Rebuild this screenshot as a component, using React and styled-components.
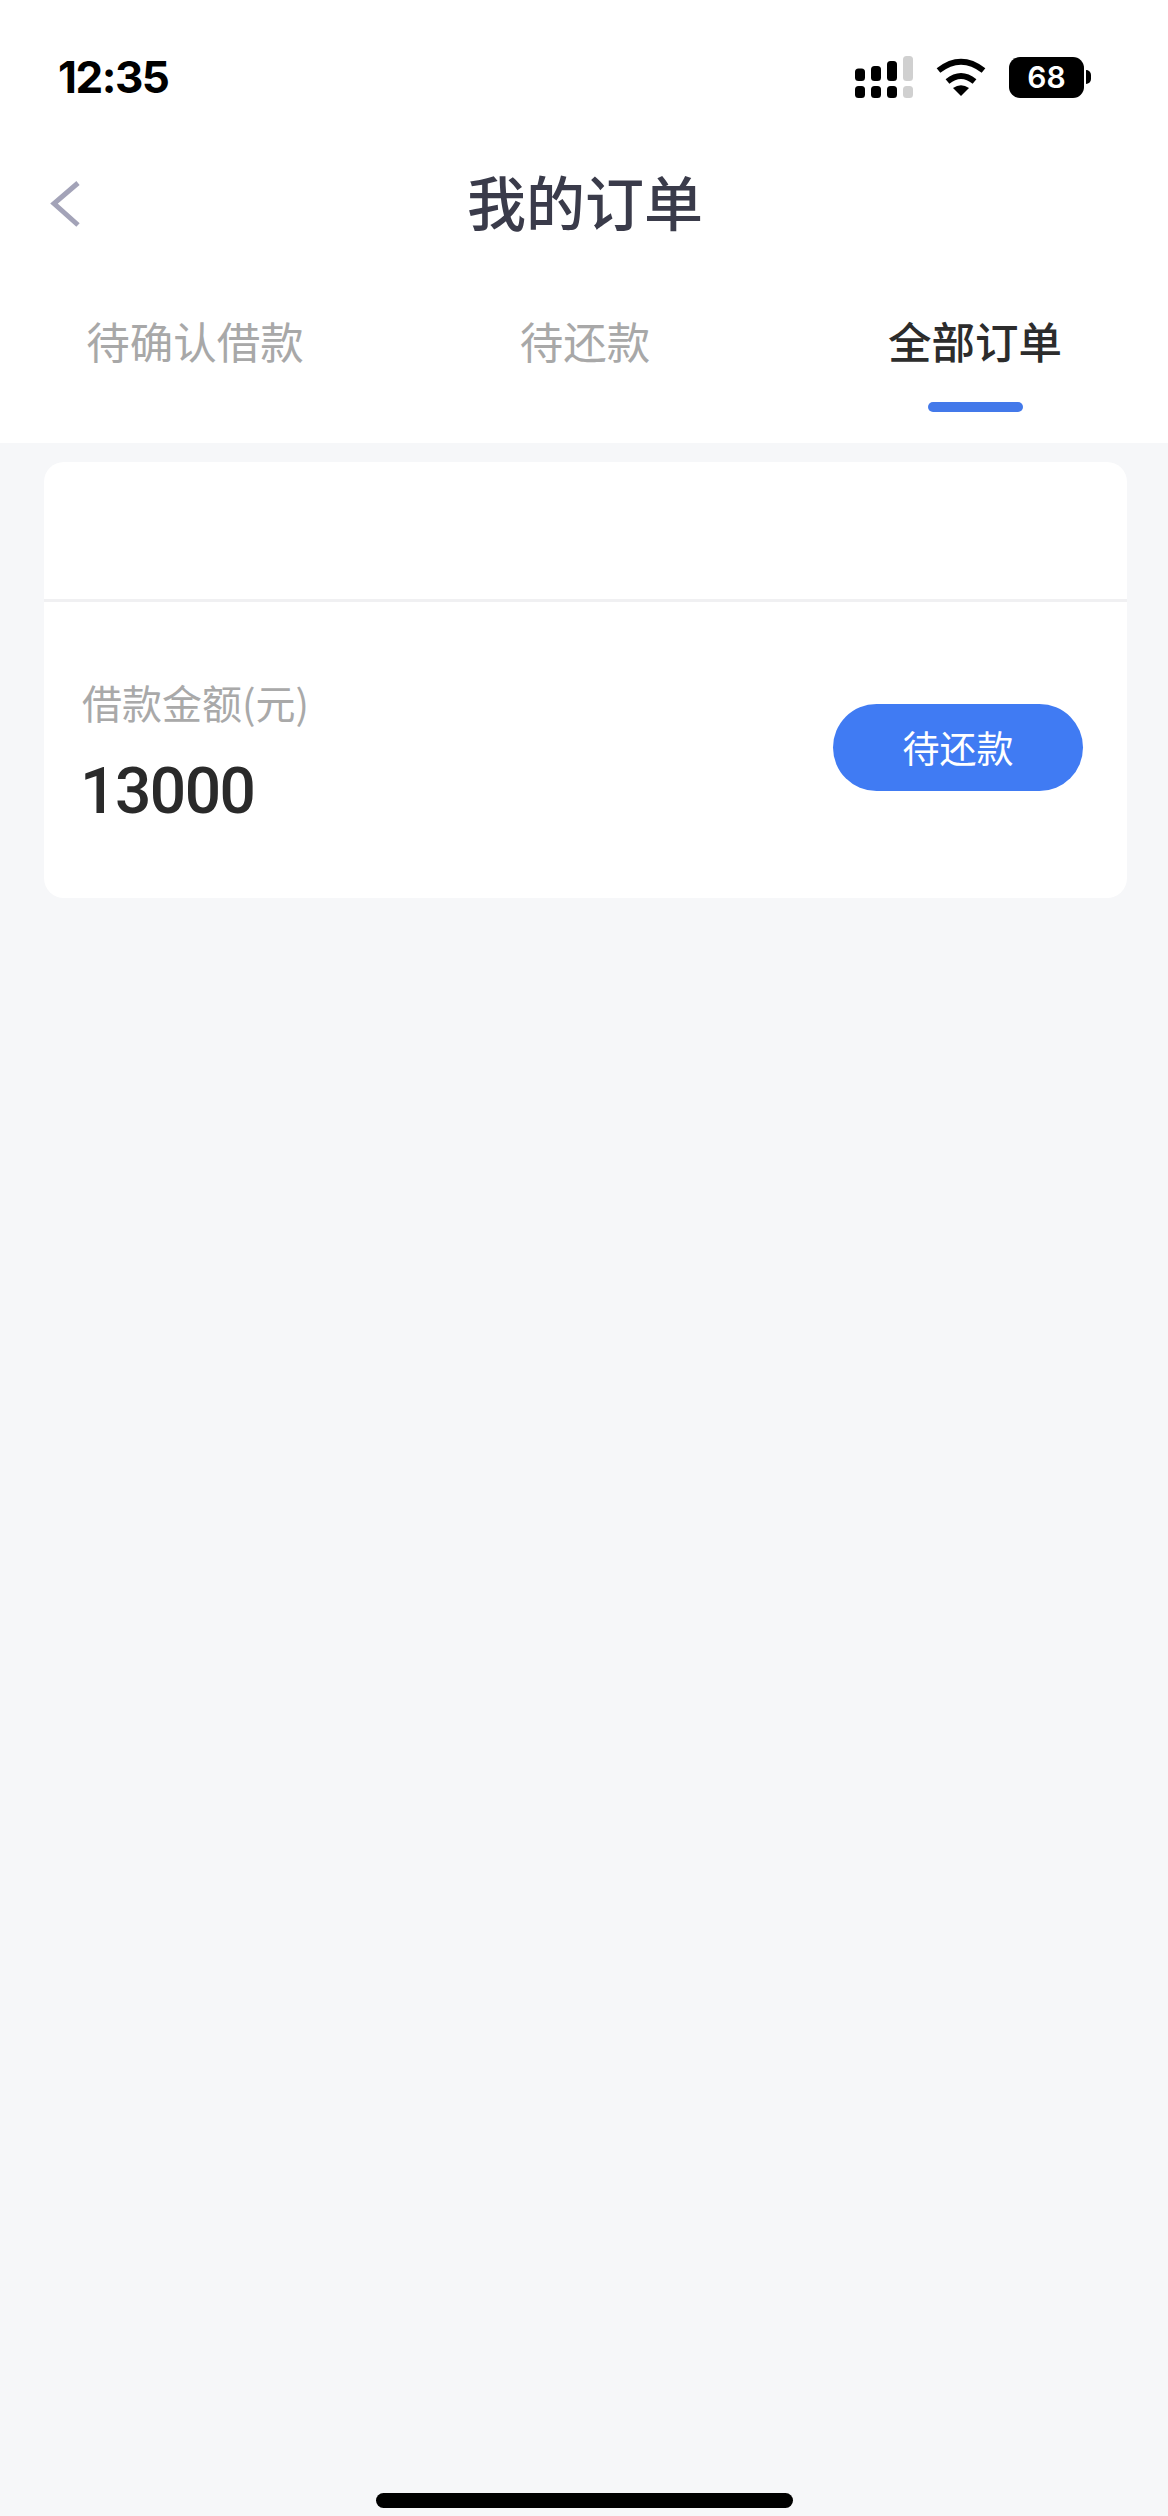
import styled, { createGlobalStyle } from "styled-components";

const TABS = ["待确认借款", "待还款", "全部订单"];
const ACTIVE_TAB = 2;

export default function App() {
  return (
    <Page>
      <GlobalStyle />
      <Header>
        <StatusBar>
          <Clock>12:35</Clock>
          <StatusIcons>
            <SignalIcon />
            <WifiIcon />
            <Battery>
              <BatteryBody>68</BatteryBody>
              <BatteryNub />
            </Battery>
          </StatusIcons>
        </StatusBar>
        <NavBar>
          <BackButton aria-label="返回">
            <svg width="30" height="48" viewBox="0 0 30 48" fill="none">
              <path d="M28 3 L4 23.5 L28 45" stroke="#a3a3b8" strokeWidth="5" />
            </svg>
          </BackButton>
          <Title>我的订单</Title>
        </NavBar>
        <Tabs>
          {TABS.map((label, i) => (
            <Tab key={label} $active={i === ACTIVE_TAB}>
              {label}
              <TabMark $active={i === ACTIVE_TAB} />
            </Tab>
          ))}
        </Tabs>
      </Header>

      <OrderCard>
        <CardTop />
        <CardBody>
          <Amount>
            <AmountLabel>借款金额(元)</AmountLabel>
            <AmountValue>13000</AmountValue>
          </Amount>
          <StatusButton>待还款</StatusButton>
        </CardBody>
      </OrderCard>

      <HomeIndicator />
    </Page>
  );
}

function SignalIcon() {
  const tops = [12.5, 10, 5, 0];
  return (
    <svg width="58" height="42" viewBox="0 0 58 42">
      {tops.map((y, i) => (
        <g key={i} fill={i === 3 ? "#d0d0d0" : "#000"}>
          <rect x={i * 16} y={y} width="10" height={25 - y} rx="3.5" />
          <rect x={i * 16} y="30" width="10" height="12" rx="3.5" />
        </g>
      ))}
    </svg>
  );
}

function WifiIcon() {
  return (
    <svg width="50" height="38" viewBox="0 0 50 38" fill="none">
      <path d="M2.5 12.5 Q25 -5 47.5 12.5" stroke="#000" strokeWidth="6" />
      <path d="M11.5 23.5 Q25 12.5 38.5 23.5" stroke="#000" strokeWidth="6" />
      <path d="M17 30 Q25 24.5 33 30 L25 38 Z" fill="#000" />
    </svg>
  );
}

const GlobalStyle = createGlobalStyle`
  html, body {
    margin: 0;
    padding: 0;
    background: #f6f7f9;
  }
  * {
    box-sizing: border-box;
  }
`;

const Page = styled.div`
  display: flex;
  flex-direction: column;
  width: 1168px;
  min-height: 2516px;
  background: #f6f7f9;
  font-family: "Noto Sans CJK SC", "Noto Sans", sans-serif;
`;

const Header = styled.header`
  background: #fff;
  height: 443px;
`;

const StatusBar = styled.div`
  display: flex;
  align-items: center;
  justify-content: space-between;
  height: 154px;
  padding: 0 77px 0 58px;
`;

const Clock = styled.span`
  font-family: Inter, "Liberation Sans", sans-serif;
  font-weight: 700;
  font-size: 44px;
  letter-spacing: -1.5px;
  line-height: 1;
  color: #000;
`;

const StatusIcons = styled.div`
  display: flex;
  align-items: center;
  gap: 23px;
`;

const Battery = styled.div`
  display: flex;
  align-items: center;
  gap: 2px;
`;

const BatteryBody = styled.div`
  display: flex;
  align-items: center;
  justify-content: center;
  width: 75px;
  height: 41px;
  border-radius: 11px;
  background: #000;
  color: #fff;
  font-family: Inter, "Liberation Sans", sans-serif;
  font-weight: 600;
  font-size: 30px;
`;

const BatteryNub = styled.div`
  width: 5px;
  height: 14px;
  border-radius: 0 7px 7px 0;
  background: #000;
`;

const NavBar = styled.div`
  display: flex;
  align-items: center;
  justify-content: center;
  position: relative;
  height: 100px;
  padding: 0 0 8px 2px;
`;

const BackButton = styled.button`
  position: absolute;
  left: 50px;
  top: 26px;
  display: flex;
  padding: 0;
  border: none;
  background: none;
`;

const Title = styled.h1`
  margin: 0;
  font-size: 59px;
  font-weight: 500;
  line-height: 1;
  color: #3a3b4a;
`;

const Tabs = styled.div`
  display: grid;
  grid-template-columns: repeat(3, 390px);
  padding-top: 57px;
`;

const Tab = styled.div`
  display: flex;
  flex-direction: column;
  align-items: center;
  font-size: 43.5px;
  line-height: 60px;
  font-weight: ${(p) => (p.$active ? 500 : 400)};
  color: ${(p) => (p.$active ? "#2c2c2c" : "#a8a8a8")};
`;

const TabMark = styled.div`
  width: 95px;
  height: 10px;
  margin-top: 31px;
  border-radius: 5px;
  background: ${(p) => (p.$active ? "#4379ea" : "transparent")};
`;

const OrderCard = styled.section`
  margin: 19px 41px 0 44px;
  background: #fff;
  border-radius: 20px;
`;

const CardTop = styled.div`
  height: 137px;
  border-bottom: 3px solid #f0f0f2;
  box-sizing: content-box;
`;

const CardBody = styled.div`
  display: flex;
  align-items: center;
  justify-content: space-between;
  height: 296px;
  padding: 0 44px 6px 38px;
`;

const Amount = styled.div`
  display: flex;
  flex-direction: column;
  gap: 28px;
  margin-top: 9px;
`;

const AmountLabel = styled.span`
  font-size: 40px;
  line-height: 52px;
  color: #a9a9a9;
`;

const AmountValue = styled.span`
  margin-left: -2px;
  font-family: Roboto, "Noto Sans", sans-serif;
  font-size: 64px;
  font-weight: 500;
  letter-spacing: -1.5px;
  line-height: 72px;
  color: #2a2a2a;
`;

const StatusButton = styled.button`
  width: 250px;
  height: 87px;
  padding: 0;
  border: none;
  border-radius: 44px;
  background: #407bf3;
  color: #fff;
  font-family: inherit;
  font-size: 37px;
  line-height: 1;
`;

const HomeIndicator = styled.div`
  align-self: center;
  width: 417px;
  height: 15px;
  margin: auto 0 8px;
  border-radius: 8px;
  background: #000;
`;
